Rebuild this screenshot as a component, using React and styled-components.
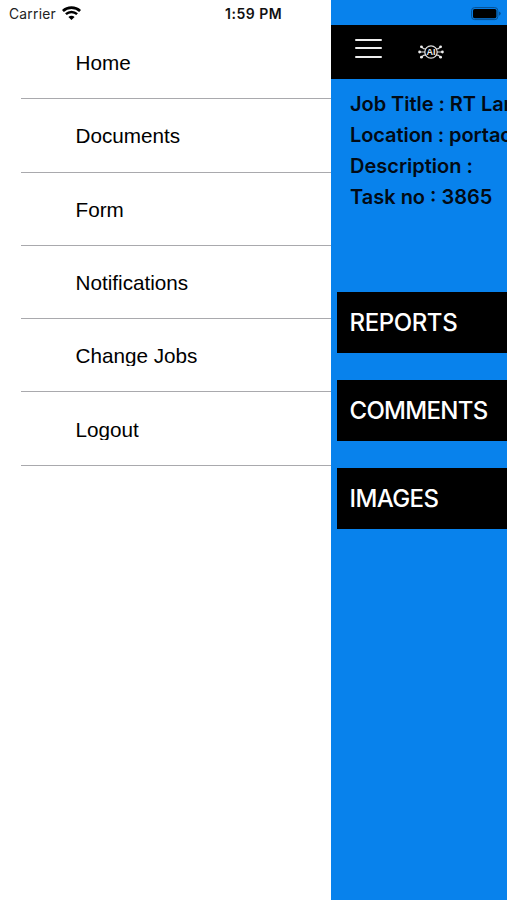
import styled, { createGlobalStyle } from 'styled-components';

const GlobalStyle = createGlobalStyle`
  * {
    box-sizing: border-box;
  }

  body {
    margin: 0;
    overflow: hidden;
  }
`;

const Screen = styled.div`
  display: flex;
  width: 507px;
  height: 900px;
  overflow: hidden;
  background: #0882ec;
  font-family: Inter, 'Liberation Sans', sans-serif;
  color: #000;
`;

const Drawer = styled.aside`
  flex: 0 0 331px;
  background: #fff;
`;

const StatusBar = styled.div`
  display: flex;
  align-items: center;
  justify-content: ${props => (props.$end ? 'flex-end' : 'flex-start')};
  height: 25px;
  padding: ${props => (props.$end ? '2px 6px 0 0' : '2px 0 0 9px')};
`;

const Carrier = styled.span`
  width: 53px;
  font-size: 13.8px;
  letter-spacing: 0.25px;
  color: #222;
`;

const Clock = styled.time`
  margin-left: 144px;
  font-size: 14px;
  font-weight: 600;
  letter-spacing: 0.5px;
  white-space: nowrap;
  color: #111;
`;

const Menu = styled.nav`
  padding: 1px 0 0 21px;
`;

const MenuItem = styled.div`
  display: flex;
  align-items: center;
  height: 73.3px;
  padding: 0 0 0 54.5px;
  border-bottom: 1px solid #a9a9ad;
`;

const MenuLabel = styled.span`
  height: 22px;
  overflow: hidden;
  font-family: 'Liberation Sans', sans-serif;
  font-size: 20.7px;
  line-height: 23px;
`;

const Main = styled.main`
  flex: 1;
  min-width: 0;
  overflow: hidden;
`;

const Header = styled.header`
  display: flex;
  align-items: center;
  gap: 36px;
  height: 54px;
  padding: 0 0 0 24px;
  background: #000;
`;

const MenuButton = styled.button`
  display: flex;
  flex-direction: column;
  gap: 6.5px;
  width: 27px;
  margin-top: -8px;
  padding: 0;
  border: 0;
  background: none;
`;

const MenuBar = styled.span`
  height: 2px;
  border-radius: 1px;
  background: #eee;
`;

const Job = styled.section`
  height: 213px;
  padding: 10px 0 0 19px;
`;

const JobLine = styled.p`
  margin: 0;
  font-size: 20px;
  font-weight: 600;
  line-height: 31px;
  letter-spacing: ${props => props.$spacing || 0}px;
  white-space: nowrap;
  color: #020a14;
`;

const Sections = styled.div`
  display: flex;
  flex-direction: column;
  gap: 27px;
  padding-left: 6px;
`;

const SectionButton = styled.button`
  height: 61px;
  padding: 0 0 0 12.5px;
  border: 0;
  background: #000;
  font-family: inherit;
  font-size: 24px;
  font-weight: 550;
  letter-spacing: ${props => props.$spacing || 0}px;
  text-align: left;
  color: #fff;
`;

const Logo = styled.svg`
  display: block;
  text {
    font-family: 'Liberation Sans', sans-serif;
    font-size: 9px;
    font-weight: 700;
  }
`;

const WifiIcon = () => (
  <svg width="19" height="15" viewBox="0 0 19 15" fill="none" stroke="#000">
    <path d="M.9 5C5.6.5 13.4.5 18.1 5" strokeWidth="2.7" />
    <path d="M3.9 8.2C7.1 5.2 11.9 5.2 15.1 8.2" strokeWidth="2.5" />
    <path d="M9.5 14 6.4 10.9C8.2 9.3 10.8 9.3 12.6 10.9Z" fill="#000" stroke="none" />
  </svg>
);

const BatteryIcon = () => (
  <svg width="30" height="14" viewBox="0 0 30 14">
    <rect x=".6" y=".6" width="26.2" height="12" rx="3" fill="none" stroke="#064f90" />
    <rect x="2" y="2" width="23.4" height="9.2" rx="1.6" />
    <path d="M27.9 4.4Q29.7 5 29.7 6.6T27.9 8.8Z" fill="#064f90" />
  </svg>
);

const AiLogo = () => (
  <Logo width="26" height="16" viewBox="0 0 26 16" fill="none" stroke="#ddd">
    <circle cx="13" cy="8" r="6.2" strokeWidth="1.3" />
    <path
      d="M7 8H2M19 8h5M8 5 5.5 4.7 3.5 2.8M8 11l-2.5.3-2 1.9M18 5l2.5-.3 2-1.9M18 11l2.5.3 2 1.9"
      strokeWidth="1.2"
    />
    <g fill="#eee" stroke="none">
      <circle cx="1.6" cy="8" r="1.4" />
      <circle cx="24.4" cy="8" r="1.4" />
      <circle cx="3.4" cy="2.8" r="1.4" />
      <circle cx="3.4" cy="13.2" r="1.4" />
      <circle cx="22.6" cy="2.8" r="1.4" />
      <circle cx="22.6" cy="13.2" r="1.4" />
      <text x="13" y="11.1" textAnchor="middle">AI</text>
    </g>
  </Logo>
);

const menuItems = ['Home', 'Documents', 'Form', 'Notifications', 'Change Jobs', 'Logout'];

const jobLines = [
  { text: 'Job Title : RT Lan', spacing: -0.05 },
  { text: 'Location : portac', spacing: -0.08 },
  { text: 'Description :' },
  { text: 'Task no : 3865' },
];

const sections = [
  { text: 'REPORTS', spacing: -0.4 },
  { text: 'COMMENTS', spacing: -0.7 },
  { text: 'IMAGES', spacing: -0.6 },
];

const App = () => {
  return (
    <>
      <GlobalStyle />
      <Screen>
        <Drawer>
          <StatusBar>
            <Carrier>Carrier</Carrier>
            <WifiIcon />
            <Clock>1:59 PM</Clock>
          </StatusBar>
          <Menu>
            {menuItems.map(item => (
              <MenuItem key={item}>
                <MenuLabel>{item}</MenuLabel>
              </MenuItem>
            ))}
          </Menu>
        </Drawer>

        <Main>
          <StatusBar $end>
            <BatteryIcon />
          </StatusBar>
          <Header>
            <MenuButton aria-label="Menu">
              <MenuBar />
              <MenuBar />
              <MenuBar />
            </MenuButton>
            <AiLogo />
          </Header>
          <Job>
            {jobLines.map(({ text, spacing }) => (
              <JobLine key={text} $spacing={spacing}>
                {text}
              </JobLine>
            ))}
          </Job>
          <Sections>
            {sections.map(({ text, spacing }) => (
              <SectionButton key={text} $spacing={spacing}>
                {text}
              </SectionButton>
            ))}
          </Sections>
        </Main>
      </Screen>
    </>
  );
};

export default App;
